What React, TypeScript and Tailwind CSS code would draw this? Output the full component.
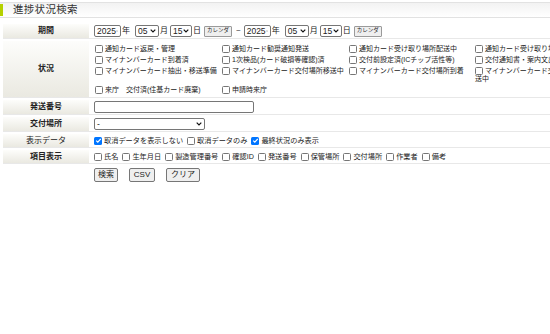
import React from "react";

function Cb({ checked, top }: { checked?: boolean; top?: boolean }) {
  const align = top ? " align-top mt-[0px]" : "";
  if (checked) {
    return (
      <span className={"inline-flex shrink-0 w-[8px] h-[8px] bg-[#0075ff] rounded-[1.5px] items-center justify-center mr-[2px]" + align}>
        <svg viewBox="0 0 8 8" className="w-[7px] h-[7px]">
          <path d="M1.4 4.2 L3.2 5.9 L6.6 2.1" stroke="white" strokeWidth="1.4" fill="none" />
        </svg>
      </span>
    );
  }
  return <span className={"inline-block shrink-0 w-[8px] h-[8px] border border-[#767676] rounded-[1.5px] bg-white mr-[2px]" + align} />;
}

function Chevron() {
  return (
    <svg viewBox="0 0 6 4" className="w-[6px] h-[4px]">
      <path d="M0.7 0.7 L3 3 L5.3 0.7" stroke="#111" strokeWidth="1.2" fill="none" />
    </svg>
  );
}

function Sel({ v, w }: { v: string; w: string }) {
  return (
    <span className={"inline-flex items-center justify-between h-[12px] border border-[#767676] rounded-[2px] bg-white pl-[2px] pr-[2px] text-[8.5px] leading-none " + w}>
      <span>{v}</span>
      <Chevron />
    </span>
  );
}

function CalBtn() {
  return (
    <span className="inline-flex items-center h-[11px] px-[2px] border border-[#9a9a9a] rounded-[1px] bg-[#efefef] text-[5.5px] leading-none">カレンダ</span>
  );
}

function Label({ children, bold = true }: { children: React.ReactNode; bold?: boolean }) {
  return (
    <div className={"w-[86px] shrink-0 flex items-center justify-center bg-gradient-to-b from-[#fdfdfb] to-[#eae9e1] text-[8px] text-[#222] " + (bold ? "font-bold" : "font-normal")}>
      {children}
    </div>
  );
}

const col1 = ["通知カード返戻・管理", "マイナンバーカード到着済", "マイナンバーカード抽出・移送準備", "来庁　交付済(住基カード廃棄)"];
const col2 = ["通知カード勧奨通知発送", "1次検品(カード破損等確認)済", "マイナンバーカード交付場所移送中", "申請時来庁"];
const col3 = ["通知カード受け取り場所配送中", "交付前設定済(ICチップ活性等)", "マイナンバーカード交付場所到着", ""];
const col4 = ["通知カード受け取り場所到着", "交付通知書・案内文出力済", "マイナンバーカード交付場所返送中", ""];

function Item({ t }: { t: string }) {
  if (!t) return <div />;
  return (
    <div className="text-[7px] leading-[8px] text-[#222]">
      <Cb top />
      {t}
    </div>
  );
}

export default function App() {
  const rows = [0, 1, 2, 3];
  return (
    <div className="w-[550px] h-[334px] overflow-hidden bg-white font-['Liberation_Sans','Noto_Sans_CJK_JP',sans-serif] text-[#222]">
      <div className="w-[700px]">
        <div className="pt-[2px]">
          <div className="h-[16px] flex items-stretch border-t border-b border-[#e2e2e2] bg-gradient-to-b from-[#f2f2f2] to-[#ffffff]">
            <div className="w-[3px] my-[1px] bg-[#b5d100]" />
            <div className="pl-[10px] flex items-center text-[10.5px] text-[#333] tracking-[0.3px]">進捗状況検索</div>
          </div>
        </div>

        <div className="mt-[6px] ml-[3px] flex flex-col gap-[2px]">
          {/* 期間 */}
          <div className="flex gap-[3px] h-[15px] border-b border-[#e8e8e8]">
            <Label>期間</Label>
            <div className="flex items-center text-[8px] leading-none pl-[2px]">
              <Sel v="2025" w="w-[27px]" />
              <span className="ml-[1px]">年</span>
              <span className="ml-[5px]"><Sel v="05" w="w-[24px]" /></span>
              <span className="ml-[1px]">月</span>
              <span className="ml-[2px]"><Sel v="15" w="w-[22px]" /></span>
              <span className="ml-[1px]">日</span>
              <span className="ml-[3px]"><CalBtn /></span>
              <span className="ml-[4px] mr-[3px]">~</span>
              <Sel v="2025" w="w-[27px]" />
              <span className="ml-[1px]">年</span>
              <span className="ml-[5px]"><Sel v="05" w="w-[24px]" /></span>
              <span className="ml-[1px]">月</span>
              <span className="ml-[2px]"><Sel v="15" w="w-[22px]" /></span>
              <span className="ml-[1px]">日</span>
              <span className="ml-[3px]"><CalBtn /></span>
            </div>
          </div>

          {/* 状況 */}
          <div className="flex gap-[3px] border-b border-[#e8e8e8]">
            <Label>状況</Label>
            <div className="pl-[3px] pt-[4px] pb-[3px] grid grid-cols-[127px_127px_126px_112px] gap-y-[3px]">
              {rows.map((r) => (
                <React.Fragment key={r}>
                  <Item t={col1[r]} />
                  <Item t={col2[r]} />
                  <Item t={col3[r]} />
                  <Item t={col4[r]} />
                </React.Fragment>
              ))}
            </div>
          </div>

          {/* 発送番号 */}
          <div className="flex gap-[3px] h-[15px] border-b border-[#e8e8e8]">
            <Label>発送番号</Label>
            <div className="flex items-center pl-[2px]">
              <span className="block w-[160px] h-[12px] border border-[#767676] rounded-[2px] bg-white" />
            </div>
          </div>

          {/* 交付場所 */}
          <div className="flex gap-[3px] h-[15px] border-b border-[#e8e8e8]">
            <Label>交付場所</Label>
            <div className="flex items-center pl-[2px]">
              <Sel v="-" w="w-[111px]" />
            </div>
          </div>

          {/* 表示データ */}
          <div className="flex gap-[3px] h-[14px] border-b border-[#e8e8e8]">
            <Label bold={false}>表示データ</Label>
            <div className="flex items-center pl-[2px] text-[7.2px] leading-none gap-[4px]">
              <span className="flex items-center"><Cb checked />取消データを表示しない</span>
              <span className="flex items-center"><Cb />取消データのみ</span>
              <span className="flex items-center"><Cb checked />最終状況のみ表示</span>
            </div>
          </div>

          {/* 項目表示 */}
          <div className="flex gap-[3px] h-[14px] border-b border-[#e8e8e8]">
            <Label>項目表示</Label>
            <div className="flex items-center pl-[2px] text-[7.2px] leading-none gap-[4px]">
              {["氏名", "生年月日", "製造管理番号", "確認ID", "発送番号", "保管場所", "交付場所", "作業者", "備考"].map((t) => (
                <span key={t} className="flex items-center"><Cb />{t}</span>
              ))}
            </div>
          </div>

          {/* Buttons */}
          <div className="flex gap-[11px] pl-[91px] pt-[2px]">
            <span className="inline-flex items-center justify-center h-[14px] w-[24px] border border-[#767676] rounded-[2px] bg-[#efefef] text-[8px] leading-none">検索</span>
            <span className="inline-flex items-center justify-center h-[14px] w-[26px] border border-[#767676] rounded-[2px] bg-[#efefef] text-[8px] leading-none">CSV</span>
            <span className="inline-flex items-center justify-center h-[14px] w-[34px] border border-[#767676] rounded-[2px] bg-[#efefef] text-[8px] leading-none">クリア</span>
          </div>
        </div>
      </div>
    </div>
  );
}
